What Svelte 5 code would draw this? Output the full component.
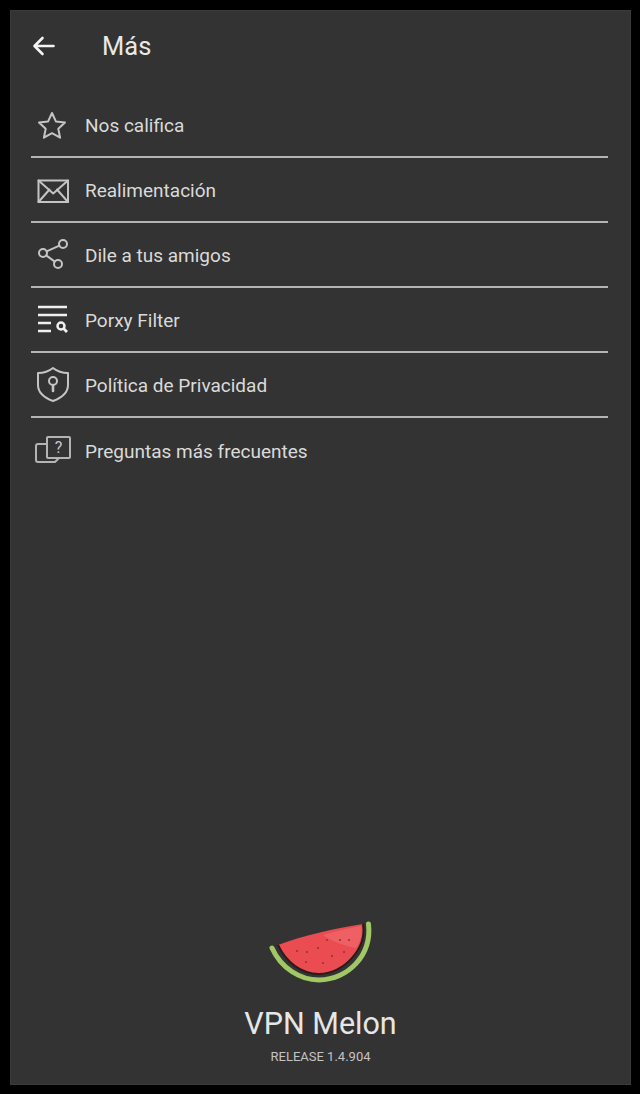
<script>
  const items = [
    { id: 'star', label: 'Nos califica' },
    { id: 'mail', label: 'Realimentación' },
    { id: 'share', label: 'Dile a tus amigos' },
    { id: 'filter', label: 'Porxy Filter' },
    { id: 'shield', label: 'Política de Privacidad' },
    { id: 'help', label: 'Preguntas más frecuentes' }
  ];
  const seeds = [[66,29],[79,29],[88,29],[36,40],[46,41],[57,37],[83,41],[45,51],[62,52],[71,45]];
</script>

<div class="screen">
  <header class="bar">
    <svg class="back" width="24" height="24" viewBox="0 0 24 24" fill="none" stroke="currentColor" stroke-width="2.600" stroke-linecap="round" stroke-linejoin="round">
      <path d="M21.500 12H3M10.500 4 2.500 12l8 8" />
    </svg>
    <h1>Más</h1>
  </header>

  <ul class="list">
    {#each items as item}
      <li class="row">
        <svg class="icon" width="40" height="40" viewBox="0 0 40 40" fill="none" stroke="#c4c4c4" stroke-width="2" stroke-linejoin="round" stroke-linecap="round">
          {#if item.id === 'star'}
            <path d="M21 8l3.900 8.400 9.100 1.100-6.700 6.200 1.800 9L21 28.200l-8.100 4.500 1.800-9L8 17.500l9.100-1.100z" />
          {:else if item.id === 'mail'}
            <rect x="7.500" y="10.500" width="29.500" height="21.500" />
            <path d="M7.500 10.500l14.700 13 14.800-13M7.500 32l11-12.500M37 32 26 19.500" />
          {:else if item.id === 'share'}
            <circle cx="12" cy="18" r="4" />
            <circle cx="32" cy="9" r="4" />
            <circle cx="27" cy="29" r="4" />
            <path d="M15.600 16.300 28.400 10.700M15.200 20.400 23.800 26.600" />
          {:else if item.id === 'filter'}
            <g stroke="#efefef" stroke-width="2.500" stroke-linecap="butt">
              <path d="M7 7H36M7 15H36M7 23H20M7 31H20" />
              <circle cx="30" cy="26" r="3.500" />
              <path d="M32.600 28.600 36 32" stroke-width="2.800" />
            </g>
          {:else if item.id === 'shield'}
            <path d="M22 3C27 7 32 8 37 8V20C37 28 30 33 22 36 14 33 7 28 7 20V8C12 8 17 7 22 3Z" />
            <circle cx="22" cy="16" r="4" />
            <path d="M22 20V26" stroke-width="2.600" />
          {:else}
            <path d="M16 6.500C16 6 16.500 6 17 6H38C38.600 6 39 6.400 39 7V26C39 26.600 38.600 27 38 27H17C16.400 27 16 26.600 16 26Z" stroke="#b4b4b4" />
            <path d="M16 13H7C5.800 13 5 13.800 5 15V29C5 30.200 5.800 31 7 31H24L28 27" stroke="#b4b4b4" />
            <text x="27.500" y="22" class="q">?</text>
          {/if}
        </svg>
        <span>{item.label}</span>
      </li>
    {/each}
  </ul>

  <footer class="about">
    <svg class="melon" width="120" height="80" viewBox="0 0 120 80" fill="none">
      <path d="M17 34C40 25 75 17 102 13 106 37 84 62 58 63 40 63 25 51 17 34Z" fill="#ea4c52" />
      <path d="M62 24C75 20 88 17 100 15 102 23 99 31 95 37 84 35 72 31 62 24Z" fill="#f0696c" opacity=".7" />
      <path d="M17 34C25 51 40 63 58 63 84 62 106 37 102 13" stroke="#2a1c1a" stroke-width="2" />
      <path d="M11 37C20 57 39 69 58 69 87 68 111 45 107.500 13" stroke="#a2c766" stroke-width="5" stroke-linecap="round" />
      {#each seeds as s}
        <circle cx={s[0]} cy={s[1]} r="1.100" fill="#9c3338" />
      {/each}
    </svg>
    <div class="name">VPN Melon</div>
    <div class="release">RELEASE 1.4.904</div>
  </footer>
</div>

<style>
  :global(body) {
    margin: 0;
    background: #000;
  }
  .screen {
    box-sizing: border-box;
    width: 621px;
    height: 1075px;
    margin: 10px 0 0 10px;
    background: #333;
    box-shadow: inset 0 0 0 1px #3b3b3b;
    display: flex;
    flex-direction: column;
    font-family: Roboto, "Liberation Sans", sans-serif;
    color: #e4e4e4;
  }
  .bar {
    height: 72px;
    display: flex;
    align-items: center;
    padding-left: 22px;
    flex: none;
  }
  .back {
    color: #f4f4f4;
  }
  h1 {
    margin: 0 0 0 46px;
    font-size: 25.500px;
    font-weight: 400;
    color: #e8e8e8;
  }
  .list {
    list-style: none;
    margin: 11px 23px 0 21px;
    padding: 0;
  }
  .row {
    box-sizing: border-box;
    height: 65px;
    padding-top: 1px;
    display: flex;
    align-items: center;
    gap: 14px;
    border-bottom: 2px solid #b4b4b4;
    font-size: 19px;
    color: #dadada;
  }
  .row:last-child {
    border-bottom: none;
  }
  .icon {
    flex: none;
  }
  .q {
    font-family: Roboto, sans-serif;
    font-size: 16px;
    fill: #c8c8c8;
    stroke: none;
    text-anchor: middle;
  }
  .about {
    margin-top: auto;
    display: flex;
    flex-direction: column;
    align-items: center;
    padding-bottom: 21px;
  }
  .melon {
    margin-bottom: 14px;
  }
  .name {
    font-size: 30.500px;
    line-height: 38px;
    color: #e6e6e6;
  }
  .release {
    margin-top: 6px;
    font-size: 13px;
    line-height: 15px;
    color: #c4c4c4;
  }
</style>
